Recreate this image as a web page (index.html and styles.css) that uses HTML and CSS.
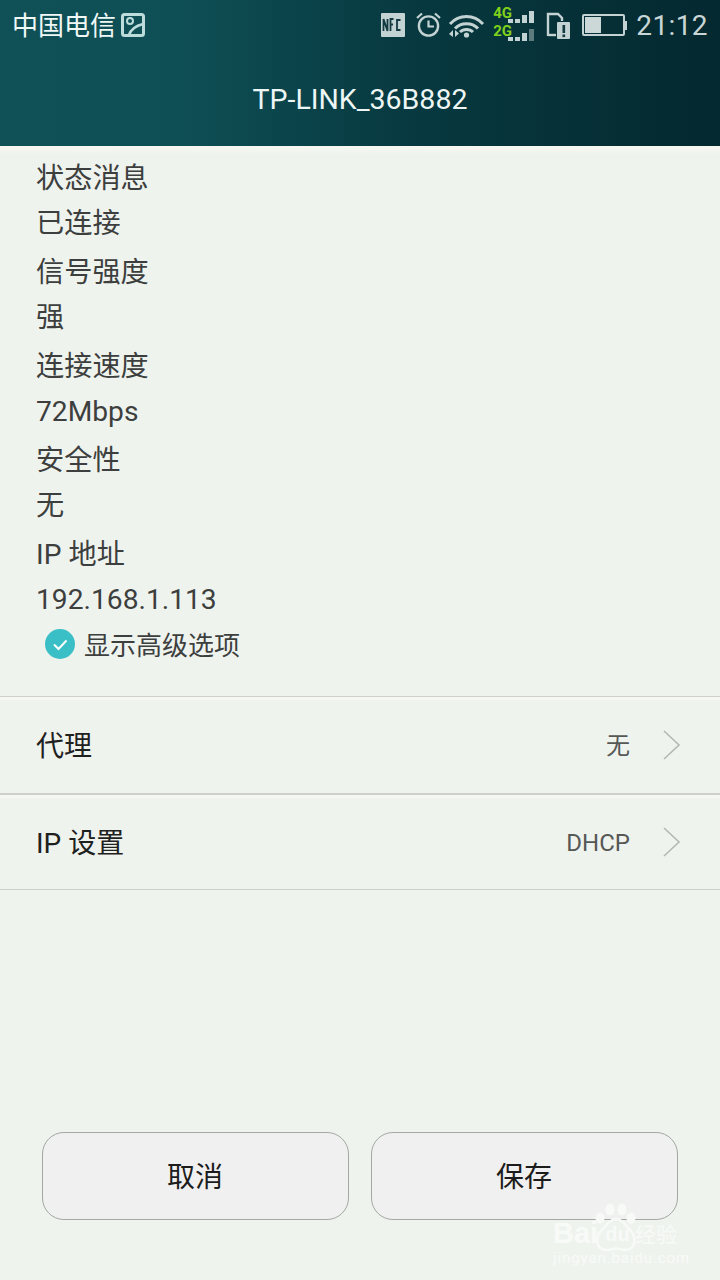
FILE: index.html
```html
<!DOCTYPE html>
<html lang="zh-CN">
<head>
    <meta charset="UTF-8">
    <meta name="viewport" content="width=device-width, initial-scale=1.0">
    <title>TP-LINK_36B882</title>
    <link rel="stylesheet" href="styles.css">
</head>
<body>
    <div class="page">
        <header class="header">
            <div class="status-bar">
                <div class="status-left">
                    <span class="carrier">中国电信</span>
                    <svg class="icon-picture" width="24" height="24" viewBox="0 0 24 24">
                        <rect x="1.5" y="1.5" width="21" height="21" rx="2" fill="none" stroke="#bcdcdc" stroke-width="3"/>
                        <circle cx="9" cy="8" r="3" fill="none" stroke="#bcdcdc" stroke-width="2"/>
                        <path d="M8 22C10 16 14 13 22 11" fill="none" stroke="#bcdcdc" stroke-width="2.6"/>
                    </svg>
                </div>
                <div class="status-right">
                    <svg class="icon-nfc" width="24" height="24" viewBox="0 0 24 24">
                        <rect width="24" height="24" rx="1" fill="#c3d2d2"/>
                        <path d="M2.5 18V6L6.5 18V6M9.5 18V6H12.5M9.5 11.5H12M19.5 7H16V17H19.5" fill="none" stroke="#123a40" stroke-width="1.8"/>
                    </svg>
                    <svg class="icon-alarm" width="25" height="26" viewBox="0 0 25 26">
                        <circle cx="12.5" cy="14" r="9.6" fill="none" stroke="#c3d2d2" stroke-width="2.4"/>
                        <path d="M12.5 8.5V14.5H18" fill="none" stroke="#c3d2d2" stroke-width="2.2"/>
                        <path d="M1 6L6 1.5M24 6L19 1.5" fill="none" stroke="#c3d2d2" stroke-width="2.2"/>
                    </svg>
                    <svg class="icon-wifi" width="37" height="25" viewBox="0 0 37 25">
                        <path d="M2 11C11 1 26 1 35 11M7 15.5C13 9 24 9 30 15.5M12 19C15.5 15.5 21.5 15.5 25 19" fill="none" stroke="#c3d2d2" stroke-width="3"/>
                        <circle cx="18.5" cy="22" r="2.6" fill="#c3d2d2"/>
                        <path d="M5 17V24L1 21ZM7 17L11 20.5L7 24Z" fill="#c3d2d2"/>
                    </svg>
                    <div class="signal">
                        <div class="signal-row">
                            <span class="net">4G</span>
                            <i class="bar b1"></i><i class="bar b2"></i><i class="bar b3"></i><i class="bar b4"></i>
                        </div>
                        <div class="signal-row">
                            <span class="net">2G</span>
                            <i class="bar b1"></i><i class="bar b2"></i><i class="bar b3"></i><i class="bar b4 dim"></i>
                        </div>
                    </div>
                    <svg class="icon-sim" width="24" height="27" viewBox="0 0 24 27">
                        <path d="M2 24V2H12L16 6V9" fill="none" stroke="#c3d2d2" stroke-width="2.4"/>
                        <path d="M2 23H10" fill="none" stroke="#c3d2d2" stroke-width="2.4"/>
                        <rect x="11" y="10" width="13" height="17" rx="1" fill="#c3d2d2"/>
                        <rect x="16.5" y="13" width="2.6" height="8" fill="#123a40"/>
                        <rect x="16.5" y="22.5" width="2.6" height="2.6" fill="#123a40"/>
                    </svg>
                    <div class="battery">
                        <div class="battery-body"><div class="battery-level"></div></div>
                        <div class="battery-tip"></div>
                    </div>
                    <span class="clock">21:12</span>
                </div>
            </div>
            <div class="title">TP-LINK_36B882</div>
        </header>

        <main class="content">
            <section class="info">
                <div class="line label">状态消息</div>
                <div class="line value">已连接</div>
                <div class="line label">信号强度</div>
                <div class="line value">强</div>
                <div class="line label">连接速度</div>
                <div class="line value">72Mbps</div>
                <div class="line label">安全性</div>
                <div class="line value">无</div>
                <div class="line label">IP 地址</div>
                <div class="line value">192.168.1.113</div>
                <div class="advanced">
                    <svg width="30" height="30" viewBox="0 0 30 30">
                        <circle cx="15" cy="15" r="15" fill="#3bbfc6"/>
                        <path d="M9 15.5L13.5 20L21.5 11.5" fill="none" stroke="#fff" stroke-width="2"/>
                    </svg>
                    <span class="advanced-text">显示高级选项</span>
                </div>
            </section>

            <div class="row row-proxy">
                <span class="row-name">代理</span>
                <span class="row-value">无</span>
                <svg class="chevron" width="18" height="30" viewBox="0 0 18 30">
                    <path d="M1 1L16 15L1 29" fill="none" stroke="#b4b8b4" stroke-width="1.6"/>
                </svg>
            </div>
            <div class="row row-ip">
                <span class="row-name">IP 设置</span>
                <span class="row-value">DHCP</span>
                <svg class="chevron" width="18" height="30" viewBox="0 0 18 30">
                    <path d="M1 1L16 15L1 29" fill="none" stroke="#b4b8b4" stroke-width="1.6"/>
                </svg>
            </div>

            <div class="actions">
                <button class="btn">取消</button>
                <button class="btn">保存</button>
            </div>
        </main>

        <div class="watermark">
            <svg class="paw" width="46" height="56" viewBox="0 0 46 56">
                <g fill="#f8faf8">
                    <ellipse cx="7" cy="15" rx="4.5" ry="5.5"/>
                    <ellipse cx="17" cy="6.5" rx="4.5" ry="6"/>
                    <ellipse cx="29" cy="6.5" rx="4.5" ry="6"/>
                    <ellipse cx="38" cy="15" rx="4.5" ry="5.5"/>
                </g>
                <path d="M23 16C16 16 14 23 9 27C1 34 3 47 14 47C18 47 20 45.5 23 45.5C26 45.5 28 47 32 47C43 47 44 34 37 27C32 23 30 16 23 16Z" fill="none" stroke="#f8faf8" stroke-width="2.5"/>
            </svg>
            <div class="wm-main">
                <span class="wm-latin">Bai</span>
                <span class="wm-du">du</span>
                <span class="wm-cn">经验</span>
            </div>
            <div class="wm-sub">jingyan.baidu.com</div>
        </div>
    </div>
</body>
</html>
```

FILE: styles.css
```css
* {
    box-sizing: border-box;
}

body {
    margin: 0;
    font-family: Roboto, "Noto Sans CJK SC", sans-serif;
    background-color: #eff3ee;
}

.page {
    position: relative;
    width: 720px;
    height: 1280px;
    overflow: hidden;
}

.header {
    height: 146px;
    background: linear-gradient(90deg, #0f5157 0%, #0e4f55 25%, #083a41 55%, #04282f 100%);
    color: #fff;
}

.status-bar {
    height: 50px;
    display: flex;
    justify-content: space-between;
    align-items: center;
    padding: 0 12px 0 12px;
}

.status-left {
    display: flex;
    align-items: center;
    gap: 5px;
}

.carrier {
    margin-top: -4px;
    font-size: 26px;
    color: #f0f8f6;
}

.status-right {
    display: flex;
    align-items: center;
}

.icon-nfc {
    margin-right: 11px;
}

.icon-alarm {
    margin-right: 7px;
}

.icon-wifi {
    margin-right: 8px;
}

.signal {
    width: 41px;
    margin-top: -2px;
    margin-right: 12px;
    display: flex;
    flex-direction: column;
    gap: 2px;
}

.signal-row {
    height: 16px;
    display: flex;
    align-items: flex-end;
    gap: 2px;
}

.net {
    align-self: flex-start;
    width: 18px;
    margin-right: -5px;
    font-size: 15px;
    line-height: 12px;
    font-weight: 700;
    color: #7fd11a;
}

.bar {
    display: block;
    width: 5px;
    background-color: #c3d2d2;
}

.b1 {
    height: 4px;
}

.b2 {
    height: 4px;
}

.b3 {
    height: 8px;
}

.b4 {
    height: 12px;
}

.dim {
    background-color: #5d7a7c;
}

.icon-sim {
    margin-right: 12px;
}

.battery {
    display: flex;
    align-items: center;
    margin-right: 9px;
}

.battery-body {
    width: 43px;
    height: 22px;
    padding: 1px;
    border: 2px solid #c3d2d2;
    border-radius: 2px;
}

.battery-level {
    width: 16px;
    height: 100%;
    background-color: #ccd8d8;
}

.battery-tip {
    width: 2px;
    height: 9px;
    background-color: #c3d2d2;
}

.clock {
    font-size: 28px;
    color: #c9d6d6;
    letter-spacing: 0.4px;
}

.title {
    height: 96px;
    padding-top: 3px;
    display: flex;
    align-items: center;
    justify-content: center;
    font-size: 28.5px;
    color: #eef6f5;
}

.content {
    height: 1134px;
    background: linear-gradient(#f8f8f2 0, #eff3ee 8px);
}

.info {
    height: 550px;
    padding: 10px 0 0 36px;
}

.line {
    font-size: 28.2px;
    color: #3d3f3e;
}

.label {
    height: 45px;
    line-height: 45px;
}

.value {
    height: 49px;
    line-height: 45px;
}

.advanced {
    height: 46px;
    margin-top: -5px;
    margin-left: 9px;
    display: flex;
    align-items: center;
    gap: 9px;
    font-size: 26px;
    color: #3d3f3e;
}

.advanced-text {
    margin-top: -2px;
}

.row {
    height: 97px;
    padding: 0 39px 0 36px;
    display: flex;
    align-items: center;
    border-top: 1px solid #cdd0cc;
    box-shadow: inset 0 3px 0 #f5f7f3;
}

.row-ip {
    border-top: 2px solid #cdd0cc;
    border-bottom: 1px solid #cdd0cc;
}

.row-name {
    flex: 1;
    margin-top: -2px;
    font-size: 28px;
    color: #1f2120;
}

.row-value {
    margin-right: 33px;
    font-size: 24px;
    color: #565856;
}

.row-proxy .row-value {
    margin-top: -4px;
}

.row-ip .row-value {
    margin-top: 2px;
}

.actions {
    margin-top: 242px;
    padding: 0 42px;
    display: flex;
    gap: 22px;
}

.btn {
    flex: 1;
    height: 88px;
    padding: 0 1px 2px 0;
    font-family: inherit;
    font-size: 28px;
    color: #1c1c1c;
    background-color: #f0f0f0;
    border: 1px solid #a3a8a3;
    border-radius: 22px;
}

/* translucent site stamp over the corner of the save button */
.watermark {
    position: absolute;
    left: 553px;
    top: 1203px;
    width: 126px;
    color: #f8faf8;
}

.paw {
    position: absolute;
    left: 40px;
    top: 0;
}

.wm-main {
    height: 22px;
    margin-top: 19px;
    display: flex;
    align-items: center;
    font-family: "Liberation Sans", "Noto Sans CJK SC", sans-serif;
    font-weight: 700;
    white-space: nowrap;
}

.wm-latin {
    width: 47px;
    font-size: 29px;
}

.wm-du {
    width: 35px;
    padding-top: 3px;
    font-size: 20px;
    text-align: center;
}

.wm-cn {
    font-size: 21px;
    font-weight: 400;
}

.wm-sub {
    margin-top: 5px;
    font-size: 15px;
    line-height: 18px;
    letter-spacing: 0.9px;
    white-space: nowrap;
}
```
